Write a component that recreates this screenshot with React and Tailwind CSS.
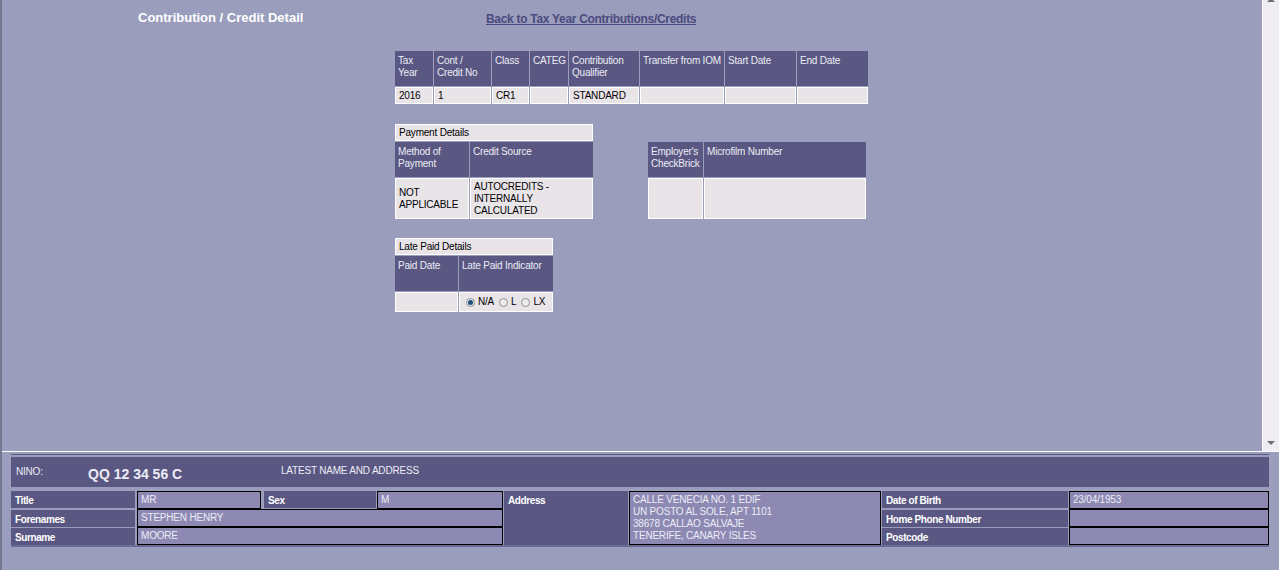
import React from 'react'

const HEAD = 'bg-[#5a5882] text-[#ececf6] pl-[3px] pt-[4px] leading-[12px] whitespace-nowrap'
const DATA = 'bg-[#e8e4e8] border border-white text-black pl-[3px] flex items-center leading-[12px] whitespace-nowrap'
const LABEL = 'bg-[#5a5882] text-white font-bold pl-[4px] pt-[4px] leading-[12px] h-[17px] tracking-[-0.4px] whitespace-nowrap'
const VALUE = 'bg-[#8d89b3] border border-black text-[#ececf6] pl-[3px] pt-[2px] leading-[12px] h-[18px] whitespace-nowrap'

function Radio({ on }) {
  return (
    <span className="inline-flex h-[9px] w-[9px] items-center justify-center rounded-full border border-[#8e8e8e] bg-[#ececec]">
      {on && <span className="h-[5px] w-[5px] rounded-full bg-[#1d4f7c]" />}
    </span>
  )
}

function Caption({ children, className }) {
  return <div className={`${DATA} h-[17px] ${className}`}>{children}</div>
}

export default function App() {
  return (
    <div className="flex h-[570px] w-[1279px] flex-col overflow-hidden border-l-2 border-[#77778f] bg-[#9b9dbc] font-['Liberation_Sans',Arial,sans-serif] text-[10px] tracking-[-0.2px]">
      {/* top frame */}
      <div className="flex h-[451px]">
        <div className="flex-1">
          <div className="flex h-[51px] pl-[136px] pt-[10px]">
            <div className="w-[348px] text-[13px] font-bold leading-[15px] tracking-normal text-white">
              Contribution / Credit Detail
            </div>
            <a className="mt-[2px] text-[12px] font-bold leading-[14px] tracking-[-0.3px] text-[#4a4a7e] underline">
              Back to Tax Year Contributions/Credits
            </a>
          </div>

          <div className="ml-[393px]">
            <div className="grid w-[473px] grid-cols-[38px_57px_37px_38px_70px_84px_71px_71px] gap-px">
              <div className={`${HEAD} h-[35px]`}>Tax<br />Year</div>
              <div className={HEAD}>Cont /<br />Credit No</div>
              <div className={HEAD}>Class</div>
              <div className={HEAD}>CATEG</div>
              <div className={HEAD}>Contribution<br />Qualifier</div>
              <div className={HEAD}>Transfer from IOM</div>
              <div className={HEAD}>Start Date</div>
              <div className={HEAD}>End Date</div>
              <div className={`${DATA} h-[17px]`}>2016</div>
              <div className={DATA}>1</div>
              <div className={DATA}>CR1</div>
              <div className={DATA}></div>
              <div className={DATA}>STANDARD</div>
              <div className={DATA}></div>
              <div className={DATA}></div>
              <div className={DATA}></div>
            </div>

            <div className="mt-[20px] flex items-end gap-[55px]">
              <div className="flex w-[198px] flex-col gap-px">
                <Caption>Payment Details</Caption>
                <div className="grid grid-cols-[74px_123px] gap-px">
                  <div className={`${HEAD} h-[35px]`}>Method of<br />Payment</div>
                  <div className={HEAD}>Credit Source</div>
                  <div className={`${DATA} h-[41px]`}>NOT<br />APPLICABLE</div>
                  <div className={DATA}>AUTOCREDITS -<br />INTERNALLY<br />CALCULATED</div>
                </div>
              </div>
              <div className="grid w-[218px] grid-cols-[55px_162px] gap-px">
                <div className={`${HEAD} h-[35px]`}>Employer's<br />CheckBrick</div>
                <div className={HEAD}>Microfilm Number</div>
                <div className={`${DATA} h-[41px]`}></div>
                <div className={DATA}></div>
              </div>
            </div>

            <div className="mt-[19px] flex w-[158px] flex-col gap-px">
              <Caption>Late Paid Details</Caption>
              <div className="grid grid-cols-[63px_94px] gap-px">
                <div className={`${HEAD} h-[35px]`}>Paid Date</div>
                <div className={HEAD}>Late Paid Indicator</div>
                <div className={`${DATA} h-[20px]`}></div>
                <div className={`${DATA} gap-[3px] pl-[6px] text-[#14143c]`}>
                  <Radio on />
                  <span className="mr-[2px]">N/A</span>
                  <Radio />
                  <span className="mr-[2px]">L</span>
                  <Radio />
                  <span>LX</span>
                </div>
              </div>
            </div>
          </div>
        </div>

        {/* scrollbar */}
        <div className="flex w-[17px] flex-col items-center justify-between border-l border-white bg-[#efedf1]">
          <span className="-mt-[2px] h-0 w-0 border-x-[4px] border-b-[4px] border-x-transparent border-b-[#6e6e6e]" />
          <span className="mb-[6px] h-0 w-0 border-x-[4px] border-t-[4px] border-x-transparent border-t-[#6e6e6e]" />
        </div>
      </div>
      <div className="h-px bg-white" />

      {/* bottom frame */}
      <div className="pl-[9px] pt-[2px]">
        <div className="w-[1258px]">
          <div className="h-px bg-[#5a5882]" />
          <div className="mt-[2px] flex h-[30px] bg-[#5a5882] text-[#ececf6]">
            <span className="ml-[5px] mt-[9px] w-[72px] leading-[12px]">NINO:</span>
            <span className="mt-[9px] w-[193px] text-[14px] font-bold leading-[16px] tracking-normal">QQ 12 34 56 C</span>
            <span className="mt-[8px] leading-[12px]">LATEST NAME AND ADDRESS</span>
          </div>
          <div className="mt-[4px] grid grid-cols-[125px_126px_112px_126px_124px_252px_186px_200px] grid-rows-[18px_18px_18px] gap-x-px">
            <div className={`${LABEL} w-[124px]`}>Title</div>
            <div className={`${VALUE} w-[124px]`}>MR</div>
            <div className={LABEL}>Sex</div>
            <div className={VALUE}>M</div>
            <div className={`${LABEL} row-span-3 h-[54px]`}>Address</div>
            <div className={`${VALUE} row-span-3 h-[54px] pt-[2px] leading-[12px]`}>
              CALLE VENECIA NO. 1 EDIF<br />
              UN POSTO AL SOLE, APT 1101<br />
              38678 CALLAO SALVAJE<br />
              TENERIFE, CANARY ISLES
            </div>
            <div className={LABEL}>Date of Birth</div>
            <div className={VALUE}>23/04/1953</div>

            <div className={`${LABEL} mt-px w-[124px]`}>Forenames</div>
            <div className={`${VALUE} col-span-3`}>STEPHEN HENRY</div>
            <div className={`${LABEL} mt-px`}>Home Phone Number</div>
            <div className={VALUE}></div>

            <div className={`${LABEL} mt-px w-[124px]`}>Surname</div>
            <div className={`${VALUE} col-span-3`}>MOORE</div>
            <div className={`${LABEL} mt-px`}>Postcode</div>
            <div className={VALUE}></div>
          </div>
          <div className="h-[2px] bg-[#6c6a94]" />
        </div>
      </div>
    </div>
  )
}
